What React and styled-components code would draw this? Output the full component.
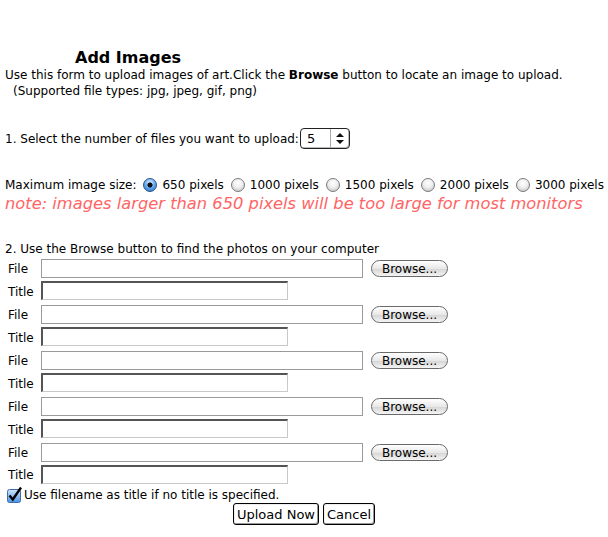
import React from 'react';
import styled, { createGlobalStyle } from 'styled-components';

const Global = createGlobalStyle`
  body {
    margin: 0;
    background: white;
    color: #000;
    font-family: "DejaVu Sans", Verdana, sans-serif;
    font-size: 12px;
    line-height: 16px;
  }
`;

const Page = styled.div`
  padding: 49px 5px 0 5px;
  width: 608px;
  box-sizing: border-box;
`;

const Heading = styled.h1`
  margin: 0 0 0 70px;
  font-size: 16px;
  line-height: 18px;
  font-weight: bold;
`;

const Line = styled.div`
  padding-left: ${p => p.indent || 0}px;
  margin-top: ${p => p.top || 0}px;
  white-space: nowrap;
`;

const Row = styled.div`
  display: flex;
  align-items: center;
  margin-top: ${p => p.top || 0}px;
  white-space: nowrap;
`;

const SelectBox = styled.div`
  display: flex;
  align-items: center;
  width: 48px;
  height: 19px;
  border: 1px solid #222;
  border-radius: 4px;
  margin-left: 1px;
  box-shadow: inset -1px -1px 0 #bbb;
  font-size: 13px;
`;

const SelectValue = styled.span`
  flex: 1;
  padding-left: 6px;
`;

const SelectArrows = styled.span`
  display: flex;
  align-items: center;
  justify-content: center;
  width: 18px;
  height: 100%;
  border-left: 1px solid #aaa;
`;

const RadioDot = styled.span`
  display: inline-block;
  flex: none;
  width: 14px;
  height: 14px;
  border-radius: 50%;
  box-sizing: border-box;
  margin: 0 5px 0 7px;
  border: 1px solid ${p => p.on ? '#2a4f8a' : '#7a7a7a'};
  background: ${p => p.on
    ? 'radial-gradient(circle at 50% 50%, #111 0 2.3px, transparent 2.8px), radial-gradient(circle at 50% 30%, #d6ecff 0, #5aa2ec 55%, #2d6fc4 100%)'
    : 'radial-gradient(circle at 50% 35%, #ffffff 0, #eeeeee 45%, #b9b9b9 100%)'};
`;

const Note = styled.div`
  font-size: 16.3px;
  line-height: 20px;
  font-style: italic;
  color: #ff6464;
  margin-top: 1px;
  white-space: nowrap;
`;

const Fields = styled.div`
  margin-top: 2px;
  padding-left: 3px;
  display: grid;
  grid-template-columns: 33px auto;
  row-gap: 3px;
`;

const Label = styled.span`
  align-self: center;
`;

const FieldCell = styled.div`
  display: flex;
  align-items: center;
  margin-bottom: ${p => p.gap || 0}px;
`;

const FileInput = styled.div`
  width: 322px;
  height: 19px;
  box-sizing: border-box;
  border: 1px solid #9a9a9a;
`;

const TitleInput = styled.input`
  width: 247px;
  height: 19px;
  box-sizing: border-box;
  margin: 0;
  padding: 0 2px;
  border: 1px solid #c9c9c9;
  border-top: 2px solid #555;
  border-left: 2px solid #555;
  font: inherit;
`;

const BrowseButton = styled.button`
  margin-left: 8px;
  width: 77px;
  height: 17px;
  padding: 0;
  border: 1px solid #6a6a6a;
  border-radius: 9px;
  background: linear-gradient(#ffffff, #e8e8e8 50%, #d4d4d4 51%, #f4f4f4);
  font-family: "DejaVu Sans", Verdana, sans-serif;
  font-size: 12px;
  line-height: 14px;
  color: #000;
`;

const CheckRow = styled.div`
  display: flex;
  align-items: center;
  margin-top: 3px;
  padding-left: 2px;
`;

const CheckIcon = styled.svg`
  margin-right: 1px;
  flex: none;
`;

const Actions = styled.div`
  display: flex;
  justify-content: center;
  gap: 4px;
  margin-top: 0;
`;

const PlainButton = styled.button`
  height: 22px;
  padding: 0 3px;
  border: 1px solid #000;
  border-radius: 3px;
  background: #fff;
  box-shadow: inset -1px -1px 0 #999, inset 1px 1px 0 #eee;
  font-family: "DejaVu Sans", Verdana, sans-serif;
  font-size: 13px;
  color: #000;
`;

const sizes = ['650', '1000', '1500', '2000', '3000'];

function UpDown() {
  return (
    <svg width="8" height="11" viewBox="0 0 8 11">
      <path d="M4 0 L8 4 L0 4 Z" fill="#111" />
      <path d="M4 11 L8 7 L0 7 Z" fill="#111" />
    </svg>
  );
}

function FileRows() {
  const rows = [];
  for (let i = 0; i < 5; i++) {
    rows.push(
      <React.Fragment key={i}>
        <Label>File</Label>
        <FieldCell>
          <FileInput />
          <BrowseButton>Browse...</BrowseButton>
        </FieldCell>
        <Label>Title</Label>
        <FieldCell gap={i < 4 ? 2 : 0}>
          <TitleInput />
        </FieldCell>
      </React.Fragment>
    );
  }
  return <Fields>{rows}</Fields>;
}

export default function App() {
  return (
    <Page>
      <Global />
      <Heading>Add Images</Heading>
      <Line>Use this form to upload images of art.Click the <b>Browse</b> button to locate an image to upload.</Line>
      <Line indent={8}>(Supported file types: jpg, jpeg, gif, png)</Line>

      <Row top={29}>
        1. Select the number of files you want to upload:
        <SelectBox>
          <SelectValue>5</SelectValue>
          <SelectArrows><UpDown /></SelectArrows>
        </SelectBox>
      </Row>

      <Row top={28}>
        Maximum image size:
        {sizes.map((s, i) => (
          <React.Fragment key={s}>
            <RadioDot on={i === 0} />
            {s} pixels
          </React.Fragment>
        ))}
      </Row>
      <Note>note: images larger than 650 pixels will be too large for most monitors</Note>

      <Line top={27}>2. Use the Browse button to find the photos on your computer</Line>
      <FileRows />

      <CheckRow>
        <CheckIcon width="16" height="16" viewBox="0 0 16 16">
          <defs>
            <linearGradient id="cb" x1="0" y1="0" x2="0" y2="1">
              <stop offset="0" stopColor="#cfe6ff" />
              <stop offset="1" stopColor="#4d93e0" />
            </linearGradient>
          </defs>
          <rect x="0.5" y="2.5" width="13" height="13" rx="2" fill="url(#cb)" stroke="#3a6fb0" />
          <path d="M2.5 8.5 L5.8 12.5 L14 0.5" fill="none" stroke="#000" strokeWidth="2.4" />
        </CheckIcon>
        Use filename as title if no title is specified.
      </CheckRow>

      <Actions>
        <PlainButton>Upload Now</PlainButton>
        <PlainButton>Cancel</PlainButton>
      </Actions>
    </Page>
  );
}
